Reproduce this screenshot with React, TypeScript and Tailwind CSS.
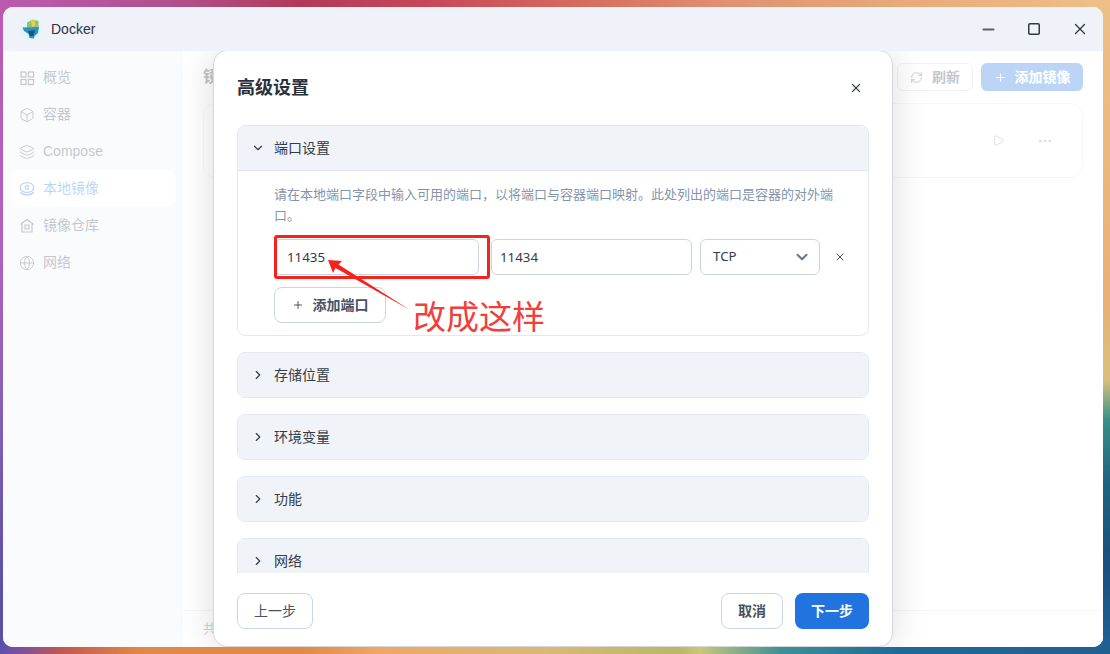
import { Box, ChevronDown, ChevronRight, Ellipsis, Globe, Layers, Minus, Play, Plus, RefreshCw, Square, X } from 'lucide-react'
import type { ReactNode } from 'react'

function LogoIcon() {
    return (
        <svg width="24" height="24" viewBox="0 0 24 24" className="shrink-0">
            <circle cx="12" cy="12" r="11.5" fill="#e6f3fa" />
            <path d="M8 5.5 L14 2.5 L19.5 4 L19.5 11 L8 11.5 Z" fill="#8fc26a" />
            <path d="M12 3.5 L16 3 L16.5 9 L13 10 Z" fill="#e6cf58" />
            <path d="M3.5 10.5 L20 10 L19 16 L15.5 19 L15 21.5 L10.5 21 L9.5 17 L5 14 Z" fill="#2b93c4" />
            <path d="M9 14 L16 13 L14.5 19 L11 19 Z" fill="#16597f" />
        </svg>
    )
}

function GridIcon() {
    return (
        <svg width="16" height="16" viewBox="0 0 16 16" fill="none" stroke="currentColor" strokeWidth="1.2">
            <rect x="2" y="2" width="5" height="5" />
            <rect x="9.5" y="2" width="5" height="5" />
            <rect x="2" y="9.5" width="5" height="5" />
            <rect x="9.5" y="9.5" width="5" height="5" />
        </svg>
    )
}

function DiskIcon() {
    return (
        <svg width="16" height="16" viewBox="0 0 16 16" fill="none" stroke="currentColor" strokeWidth="1.2">
            <ellipse cx="8" cy="6.5" rx="6.8" ry="4.8" />
            <circle cx="8" cy="6.5" r="1.8" />
            <path d="M1.5 11.5 C4 14.6 12 14.6 14.5 11.5" strokeLinecap="round" />
        </svg>
    )
}

function HouseIcon() {
    return (
        <svg width="16" height="16" viewBox="0 0 16 16" fill="none" stroke="currentColor" strokeWidth="1.2" strokeLinejoin="round">
            <path d="M8 1.5 L14 6 L13 6.8 V14 H3 V6.8 L2 6 Z" />
            <rect x="6" y="7" width="4" height="4" />
        </svg>
    )
}

const navItems: { label: string; icon: ReactNode; active?: boolean }[] = [
    { label: '概览', icon: <GridIcon /> },
    { label: '容器', icon: <Box size={16} strokeWidth={1.4} /> },
    { label: 'Compose', icon: <Layers size={16} strokeWidth={1.4} /> },
    { label: '本地镜像', icon: <DiskIcon />, active: true },
    { label: '镜像仓库', icon: <HouseIcon /> },
    { label: '网络', icon: <Globe size={16} strokeWidth={1.3} /> },
]

function Section({ title, open, clipped, children }: { title: string; open?: boolean; clipped?: boolean; children?: ReactNode }) {
    return (
        <div className={`shrink-0 border border-[#e3e8f0] overflow-hidden ${clipped ? 'rounded-t-lg' : 'rounded-lg'}`}>
            <div className={`flex items-center h-[44px] pl-[13px] bg-[#f0f3f8] ${open ? 'border-b border-[#e3e8f0] h-[45px]' : ''}`}>
                {open ? (
                    <ChevronDown size={14} strokeWidth={2} className="text-[#333c4a]" />
                ) : (
                    <ChevronRight size={14} strokeWidth={2} className="text-[#333c4a]" />
                )}
                <span className="ml-[9px] text-[14px] text-[#333c4a]">{title}</span>
            </div>
            {children}
        </div>
    )
}

export default function App() {
    return (
        <div className="w-[1110px] h-[654px] overflow-hidden pl-[3px] pt-[7px] font-['Liberation_Sans','Noto_Sans_CJK_SC',sans-serif] [background:linear-gradient(90deg,#bb5bb0_0,#b0508a_180px,#b23a58_300px,#c84858_430px,#d87060_600px,#e09070_720px,#e8aa78_900px,#efc088_1110px)_0_0/100%_10px_no-repeat,linear-gradient(90deg,#5a50b0_0,#7a50a0_20px,#c05850_60px,#e08848_140px,#e08848_300px,#eda868_380px,#d8b878_550px,#b8b868_680px,#c8c878_700px,#409098_780px,#206898_900px,#206090_1110px)_0_100%/100%_10px_no-repeat,linear-gradient(180deg,#bb5bb0_0,#b060c0_250px,#8860b8_400px,#5850a8_600px,#5850a8_654px)_0_0/10px_100%_no-repeat,linear-gradient(180deg,#ecc088_0,#e8b078_300px,#d8c080_380px,#389088_420px,#1f6480_480px,#1c4f7c_560px,#20609a_654px)_100%_0/10px_100%_no-repeat,#e08848]">
            <div className="relative w-[1100px] h-[640px] rounded-[10px] overflow-hidden flex flex-col bg-white">
                {/* title bar */}
                <div className="h-[44px] shrink-0 bg-[#eff3f9] flex items-center pl-[16px]">
                    <LogoIcon />
                    <span className="ml-[8px] text-[14px] font-medium text-[#2e3440]">Docker</span>
                    <div className="ml-auto flex items-center text-[#333a46]">
                        <span className="w-[46px] flex justify-center">
                            <Minus size={17} strokeWidth={3} className="text-[#5a606b]" />
                        </span>
                        <span className="w-[46px] flex justify-center">
                            <Square size={14} strokeWidth={2.6} />
                        </span>
                        <span className="w-[46px] flex justify-center">
                            <X size={18} strokeWidth={1.8} />
                        </span>
                    </div>
                </div>

                {/* app body, dimmed by the dialog */}
                <div className="relative flex-1 flex min-h-0 overflow-hidden">
                    <div className="w-[180px] shrink-0 bg-[#eef2f9] px-[8px] pt-[8px] flex flex-col">
                        {navItems.map((item) => (
                            <div
                                key={item.label}
                                className={`h-[37px] flex items-center pl-[8px] rounded-lg text-[14px] ${item.active ? 'bg-white text-[#2174e0]' : 'text-[#3a4250]'}`}
                            >
                                <span className="w-[16px] flex justify-center">{item.icon}</span>
                                <span className="ml-[8px]">{item.label}</span>
                            </div>
                        ))}
                    </div>
                    <div className="flex-1 bg-white rounded-tl-[10px] flex flex-col min-w-0">
                        <div className="px-[20px] flex-1">
                            <div className="h-[52px] flex items-center">
                                <span className="text-[16px] font-bold text-[#333a46]">镜像</span>
                                <button className="ml-auto h-[28px] w-[76px] flex items-center justify-center gap-[9px] rounded-md border border-[#c9d0da] text-[14px] font-bold text-[#3a4250]">
                                    <RefreshCw size={13} strokeWidth={1.6} />
                                    刷新
                                </button>
                                <button className="ml-[8px] h-[28px] w-[102px] flex items-center justify-center gap-[8px] rounded-md bg-[#2174e0] text-[14px] font-bold text-white">
                                    <Plus size={13} strokeWidth={2} />
                                    添加镜像
                                </button>
                            </div>
                            <div className="h-[75px] rounded-xl border border-[#dfe4ec] flex items-center justify-end pr-[29px] gap-[32px] text-[#7f8a9c]">
                                <Play size={13} strokeWidth={1.6} />
                                <Ellipsis size={16} strokeWidth={2} />
                            </div>
                        </div>
                        <div className="h-[37px] border-t border-[#dfe4ec] px-[20px] flex items-center text-[13px] text-[#5b6676]">共</div>
                    </div>
                    <div className="absolute inset-0 bg-white/70" />

                    {/* dialog */}
                    <div className="absolute left-[210px] top-[-1px] w-[680px] h-[597px] bg-white rounded-[14px] border border-[#d4d7dc] shadow-[0_0_36px_rgba(0,0,0,0.14)] flex flex-col overflow-hidden">
                        <div className="h-[74px] shrink-0 flex items-center justify-between pl-[23px] pr-[29px]">
                            <span className="text-[18px] font-bold text-[#2a303b]">高级设置</span>
                            <X size={14} strokeWidth={2} className="text-[#3a4250]" />
                        </div>
                        <div className="flex-1 min-h-0 overflow-hidden px-[23px] flex flex-col gap-[16px]">
                            <Section title="端口设置" open>
                                <div className="pl-[36px] pr-[20px] pt-[13px] pb-[12px]">
                                    <p className="text-[13px] leading-[21px] text-[#8494aa]">
                                        请在本地端口字段中输入可用的端口，以将端口与容器端口映射。此处列出的端口是容器的对外端口。
                                    </p>
                                    <div className="mt-[13px] flex items-center font-['Noto_Sans','Noto_Sans_CJK_SC',sans-serif]">
                                        <input readOnly value="11435" className="w-[205px] h-[36px] px-[12px] rounded-md border border-[#cbd5e1] text-[13.3px] text-[#333c4a] outline-none" />
                                        <input readOnly value="11434" className="ml-[12px] w-[201px] h-[36px] px-[8px] rounded-md border border-[#cbd5e1] text-[13.3px] text-[#333c4a] outline-none" />
                                        <div className="ml-[8px] w-[120px] h-[36px] px-[12px] rounded-md border border-[#cbd5e1] flex items-center justify-between text-[13.3px] text-[#333c4a]">
                                            TCP
                                            <ChevronDown size={18} strokeWidth={2.6} className="text-[#64748b] -mr-[4px]" />
                                        </div>
                                        <X size={12} strokeWidth={2} className="ml-[14px] text-[#4a5362]" />
                                    </div>
                                    <button className="mt-[12px] w-[112px] h-[36px] rounded-lg border border-[#cbd5e1] flex items-center justify-center gap-[9px] text-[14px] font-bold text-[#475264]">
                                        <Plus size={12} strokeWidth={2} />
                                        添加端口
                                    </button>
                                </div>
                            </Section>
                            <Section title="存储位置" />
                            <Section title="环境变量" />
                            <Section title="功能" />
                            <Section title="网络" clipped />
                        </div>
                        <div className="h-[73px] shrink-0 flex items-center px-[23px] pt-[3px]">
                            <button className="w-[76px] h-[36px] rounded-lg border border-[#cbd5e1] text-[14px] text-[#475264]">上一步</button>
                            <button className="ml-auto w-[62px] h-[36px] rounded-lg border border-[#cbd5e1] text-[14px] font-bold text-[#475264]">取消</button>
                            <button className="ml-[12px] w-[74px] h-[36px] rounded-lg bg-[#2174e0] text-[14px] font-bold text-white">下一步</button>
                        </div>
                    </div>
                </div>

                {/* red annotation on top of the screenshot */}
                <div className="absolute left-[271px] top-[228px] w-[216px] h-[44px] rounded-[3px] border-[3px] border-[#f5231c]" />
                <svg className="absolute left-[320px] top-[248px]" width="90" height="60" viewBox="0 0 90 60">
                    <path d="M5 5 L19 6 L15.5 9.5 L87 55 L12.5 13 L10 18 Z" fill="#f5231c" />
                </svg>
                <span className="absolute left-[410px] top-[289px] text-[33px] leading-[44px] text-[#f0403a]">改成这样</span>
            </div>
        </div>
    )
}
